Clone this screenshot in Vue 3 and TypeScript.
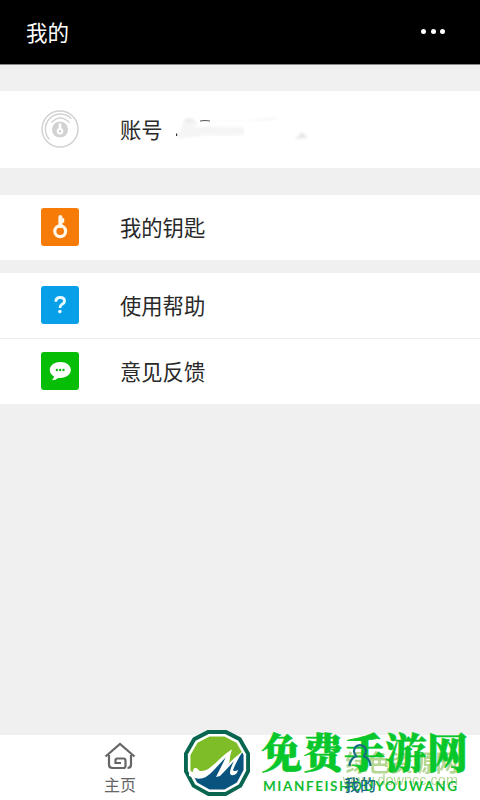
<template>
  <div class="page">
    <header class="topbar">
      <h1>我的</h1>
      <button class="more" aria-label="more"><i></i><i></i><i></i></button>
    </header>

    <section class="row account">
      <svg class="icon" viewBox="0 0 38 38" fill="none" stroke="#d2d2d2">
        <circle cx="19" cy="19" r="18" stroke-width="1.5" />
        <path d="M8.5 29.5A15 15 0 0 1 30.5 8.8" stroke-width="1.5" />
        <path d="M10.5 12.5Q19 3.5 28.5 12.5" stroke-width="1.3" />
        <circle cx="19" cy="19.5" r="8" fill="#d2d2d2" stroke="none" />
        <circle cx="19" cy="21.3" r="2.3" stroke="#fff" stroke-width="2" />
        <path d="M19 13.5V19" stroke="#fff" stroke-width="2.6" />
      </svg>
      <span class="label">账号</span>
      <svg class="smudge" viewBox="0 0 136 30">
        <defs>
          <filter id="soft"><feGaussianBlur stdDeviation="1" /></filter>
        </defs>
        <g filter="url(#soft)">
          <path d="M0 24L6 13L9 5Q17 4 22 9L18 13Q30 12 68 13V21Q48 22 30 21Q15 25 0 24Z" fill="#f5f5f5" />
          <path d="M7 6Q15 2 19 7L12 10Z" fill="#ededed" />
          <path d="M36 6H75L97 3L104 5L88 7H36Z" fill="#f7f7f7" />
          <path d="M119 25L126 18L132 24Z" fill="#e8e8e8" />
        </g>
        <path d="M24 7Q29 6 34 7" fill="none" stroke="#555" stroke-width="1" />
        <rect x="0" y="19.5" width="1.2" height="2.5" fill="#333" />
      </svg>
    </section>

    <section v-for="(group, i) in groups" :key="i" class="group">
      <div v-for="item in group" :key="item.icon" class="row">
        <svg class="icon" :class="item.icon" viewBox="0 0 38 38">
          <g v-if="item.icon === 'key'" fill="none" stroke="#fff8ea">
            <circle cx="19.2" cy="23.3" r="5.4" stroke-width="3.2" />
            <path d="M19.4 18V9" stroke-width="4" stroke-linecap="round" />
            <path d="M20 12.5h3.2" stroke-width="4.5" />
          </g>
          <g v-else-if="item.icon === 'help'" fill="none" stroke="#e9fbff">
            <path d="M14.8 15.8Q14.8 11.5 19.2 11.5Q23.5 11.5 23.5 15Q23.5 17.2 20.8 18.5Q19 19.5 19 22" stroke-width="2.8" />
            <circle cx="18.9" cy="25.6" r="1.8" fill="#e9fbff" stroke="none" />
          </g>
          <g v-else>
            <path d="M19.2 10C12.5 10 8.8 13.8 8.8 18.1C8.8 21 10.4 23.2 13.1 24.6Q12.7 26.6 10.8 28.2Q15 28 17.2 25.9C24.5 26.8 29.8 23 29.8 18.1C29.8 13.3 25.5 10 19.2 10Z" fill="#fff" />
            <g fill="#15b915">
              <circle cx="15.9" cy="18" r="1.2" />
              <circle cx="19.2" cy="18" r="1.2" />
              <circle cx="22.5" cy="18" r="1.2" />
            </g>
          </g>
        </svg>
        <span class="label">{{ item.label }}</span>
      </div>
    </section>

    <nav class="tabs">
      <div class="tab">
        <svg class="tab-icon" viewBox="0 0 32 28" fill="none" stroke="#666" stroke-width="2.2">
          <path d="M1.5 14.5L16 2L30.5 14.5" />
          <path d="M5 13V22.5Q5 26 8.5 26H19.5Q21.5 26 21.5 24V18.5Q21.5 16.5 19.5 16.5H13.2Q11.5 16.5 11.5 18V21H17" />
          <path d="M27 13V22.5Q27 26 23.5 26" />
        </svg>
        <span>主页</span>
      </div>
      <div class="tab active">
        <svg class="tab-icon" viewBox="0 0 32 28" fill="none" stroke="#176b83" stroke-width="2.2">
          <path d="M12 13.5A6 6 0 1 1 20 13.5" />
          <path d="M5.5 24Q6 16 13 14M19 14Q26 16 26.5 24" />
        </svg>
        <span>我的</span>
      </div>
    </nav>

    <div class="source-mark">
      <b>绿色资源网</b>
      <span>www.downcc.com</span>
    </div>

    <div class="brand">
      <svg class="brand-logo" viewBox="0 0 68 68">
        <defs>
          <clipPath id="badge-inner">
            <path :d="badge" transform="translate(34 34) scale(.83) translate(-34 -34)" />
          </clipPath>
        </defs>
        <path :d="badge" fill="#086650" stroke="#086650" stroke-width="2" stroke-linejoin="round" />
        <path :d="badge" fill="#fff" transform="translate(34 34) scale(.91) translate(-34 -34)" />
        <g clip-path="url(#badge-inner)">
          <path d="M0 0H68V24L58 25L46 36L48 21L22 43L0 45Z" fill="#7fbd28" />
          <path d="M0 46Q15 50 24 43L43 27L38 43L61 22H68V68H0Z" fill="#08547e" />
        </g>
        <path d="M6 42L10 43Q10 37 15 40Q15 42 19 42Q26 41 33 34Q41 25 49 20.5Q46 30 41 40Q48 31 60 22Q54 31 50 41Q51 43 55 41Q54 47 48 46Q45 44 51 32Q44 40 37 47L33 48L43 28L30 42Q21 52 12 49L6 47Z" fill="#fff" />
      </svg>
      <svg class="brand-words" viewBox="0 0 212 70">
        <text x="1" y="40" class="brand-name" textLength="207" lengthAdjust="spacing">免费手游网</text>
        <text x="3" y="62.5" class="brand-latin" textLength="194" lengthAdjust="spacing">MIANFEISHOUYOUWANG</text>
      </svg>
    </div>
  </div>
</template>

<script setup lang="ts">
interface Item {
  icon: string
  label: string
}

const groups: Item[][] = [
  [{ icon: 'key', label: '我的钥匙' }],
  [
    { icon: 'help', label: '使用帮助' },
    { icon: 'feedback', label: '意见反馈' }
  ]
]

// twelve-sided outline around the logo
const badge = 'M25 2H43L57.5 9.5L66 24.5V42.5L58 57.5L43 66H25L10 57.5L2 42.5V24.5L10.5 9.5Z'
</script>

<style>
body {
  margin: 0;
  background: #f0f0f0;
}
</style>

<style scoped>
.page {
  position: relative;
  display: flex;
  flex-direction: column;
  height: 800px;
  overflow: hidden;
  background: #f0f0f0;
  color: #292929;
  font-family: "Noto Sans CJK SC", sans-serif;
}

.topbar {
  display: flex;
  align-items: center;
  justify-content: space-between;
  box-sizing: border-box;
  height: 65px;
  margin-bottom: 26px;
  padding: 0 35px 2px 26px;
  border-bottom: 1px solid #888;
  background: #000;
  color: #fff;
}

h1 {
  margin: 0;
  font-size: 21.5px;
  font-weight: 400;
}

.more {
  display: flex;
  gap: 4.5px;
  padding: 0;
  border: 0;
  background: none;
}

.more i {
  width: 5px;
  height: 5px;
  border-radius: 50%;
  background: #fff;
}

.row {
  display: flex;
  align-items: center;
  box-sizing: border-box;
  height: 65px;
  padding: 0 0 1px 41px;
  background: #fff;
}

.account {
  height: 77px;
  margin-bottom: 27px;
}

.group {
  margin-bottom: 13px;
}

.row + .row {
  height: 66px;
  border-top: 1px solid #ececec;
}

.icon {
  width: 38px;
  height: 38px;
  margin-right: 41px;
  border-radius: 3px;
}

.key {
  background: #f77b07;
}

.help {
  background: #069fe8;
}

.feedback {
  background: #06be06;
}

.label {
  font-size: 21.3px;
  line-height: 30px;
}

.smudge {
  width: 136px;
  height: 30px;
  margin-left: 13px;
}

.tabs {
  display: flex;
  justify-content: space-around;
  height: 65px;
  margin-top: auto;
  background: #fff;
}

.tab {
  display: flex;
  flex: 1;
  flex-direction: column;
  align-items: center;
  color: #666;
  font-size: 16px;
  line-height: 20px;
}

.tab-icon {
  width: 32px;
  height: 28px;
  margin: 7px 0 4px;
}

.active {
  position: relative;
  z-index: 2;
  color: #176b83;
  font-weight: 500;
}

/* marks lying over the tab bar */
.source-mark {
  position: absolute;
  right: 22px;
  bottom: 12px;
  display: flex;
  flex-direction: column;
  align-items: flex-end;
  color: #8fc25c;
  opacity: 0.65;
}

.source-mark b {
  font-size: 22.5px;
  line-height: 23px;
}

.source-mark span {
  font: 14.5px/15px "Liberation Sans", sans-serif;
}

.brand {
  position: absolute;
  right: 8px;
  bottom: 2px;
  display: flex;
  align-items: center;
  gap: 9px;
}

.brand-logo {
  width: 68px;
  height: 68px;
}

.brand-words {
  width: 212px;
  height: 70px;
}

.brand-name {
  fill: #08c72b;
  stroke: #08c72b;
  stroke-width: 0.6px;
  font-family: "Noto Serif CJK SC", "Noto Sans CJK SC", serif;
  font-size: 41px;
  font-weight: 900;
}

.brand-latin {
  fill: #12bd32;
  font-family: Lato, sans-serif;
  font-size: 13.5px;
  font-weight: 700;
}
</style>
